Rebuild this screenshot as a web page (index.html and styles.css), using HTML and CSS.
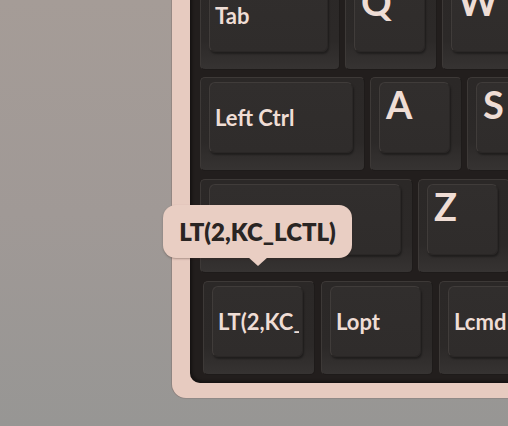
FILE: index.html
```html
<!DOCTYPE html>
<html>
<head>
<meta charset="utf-8">
<link rel="stylesheet" href="styles.css">
</head>
<body>
<div class="scene">
  <div class="case">
    <div class="plate">
      <div class="row row-top">
        <div class="key u150"><div class="cap label"><span>Tab</span></div></div>
        <div class="key u100"><div class="cap letter"><span>Q</span></div></div>
        <div class="key u100"><div class="cap letter"><span>W</span></div></div>
      </div>
      <div class="row">
        <div class="key u175"><div class="cap label"><span>Left Ctrl</span></div></div>
        <div class="key u100"><div class="cap letter"><span>A</span></div></div>
        <div class="key u100"><div class="cap letter"><span>S</span></div></div>
      </div>
      <div class="row">
        <div class="key u225"><div class="cap label"><span></span></div></div>
        <div class="key u100"><div class="cap letter"><span>Z</span></div></div>
        <div class="key u100"><div class="cap letter"><span>X</span></div></div>
      </div>
      <div class="row row-bottom">
        <div class="key u125"><div class="cap label clipcap"><span class="clip">LT(2,KC_LCTL)</span></div></div>
        <div class="key u125"><div class="cap label"><span>Lopt</span></div></div>
        <div class="key u125"><div class="cap label"><span>Lcmd</span></div></div>
      </div>
    </div>
  </div>
  <div class="tooltip">LT(2,KC_LCTL)</div>
</div>
</body>
</html>
```
FILE: styles.css
```css
html, body {
  margin: 0;
  padding: 0;
}
body {
  width: 508px;
  height: 426px;
  overflow: hidden;
  font-family: Lato, "Open Sans", sans-serif;
}
.scene {
  position: relative;
  width: 508px;
  height: 426px;
  overflow: hidden;
  box-sizing: border-box;
  padding-left: 172px;
  background: linear-gradient(180deg, #a59c97 0%, #a09996 50%, #979694 100%);
}
.case {
  width: 420px;
  margin-top: -40px;
  height: 438px;
  box-sizing: border-box;
  padding: 0 0 15px 18px;
  background: #e7cbc0;
  border-radius: 0 0 0 14px;
  box-shadow: -1px 0 0 rgba(120, 100, 95, 0.35), 0 1px 0 rgba(120, 100, 95, 0.25);
}
.plate {
  height: 100%;
  box-sizing: border-box;
  background: #221e1d;
  border-radius: 0 0 0 10px;
  padding: 14px 0 0 10px;
  display: flex;
  flex-direction: column;
  gap: 8px;
  box-shadow: inset 2px -2px 3px rgba(0, 0, 0, 0.4);
}
.row {
  display: flex;
  gap: 5px;
  height: 94px;
}
.row-top {
  height: 96px;
  margin-bottom: -1px;
}
.row-top .key {
  height: 96px;
}
.row-bottom {
  gap: 6px;
  padding-left: 3px;
}
.key {
  flex: none;
  box-sizing: border-box;
  height: 94px;
  background: linear-gradient(180deg, #2b2827 0%, #2c2928 70%, #363332 100%);
  border: 1px solid #3d3937;
  border-right-color: #1e1b1a;
  border-bottom-color: #1e1b1a;
  border-radius: 5px;
  padding: 4px 11px 17px 8px;
  display: flex;
}
.u100 { width: 92px; }
.u125 { width: 112px; }
.u150 { width: 140px; }
.u175 { width: 165px; }
.u225 { width: 213px; }
.cap {
  flex: 1;
  box-sizing: border-box;
  background: linear-gradient(180deg, #312e2d 0%, #2f2c2b 100%);
  border: 1px solid #403c3a;
  border-right-color: #2a2726;
  border-bottom-color: #2a2726;
  border-radius: 6px;
  box-shadow: 1px 2px 2px rgba(0, 0, 0, 0.35);
  color: #efddd5;
  display: flex;
  min-width: 0;
}
.label {
  align-items: center;
  padding: 0 5px 0 5px;
  font-size: 22px;
  font-weight: 700;
  white-space: nowrap;
}
.clipcap {
  padding-right: 3px;
}
.label .clip {
  overflow: hidden;
  display: block;
  min-width: 0;
}
.letter {
  align-items: flex-start;
  padding: 2px 6px;
  font-size: 38px;
  font-weight: 700;
  line-height: 1;
}
.tooltip {
  position: absolute;
  left: 163px;
  top: 205px;
  width: 189px;
  height: 53px;
  box-sizing: border-box;
  background: #e9cec3;
  border-radius: 13px;
  box-shadow: 0 1px 2px rgba(60, 40, 35, 0.35);
  color: #2a2523;
  font-size: 24px;
  font-weight: 800;
  display: flex;
  align-items: center;
  justify-content: center;
  white-space: nowrap;
}
.tooltip::after {
  content: "";
  position: absolute;
  left: 50%;
  bottom: -8px;
  margin-left: -10px;
  border-left: 10px solid transparent;
  border-right: 10px solid transparent;
  border-top: 9px solid #e9cec3;
}
```
